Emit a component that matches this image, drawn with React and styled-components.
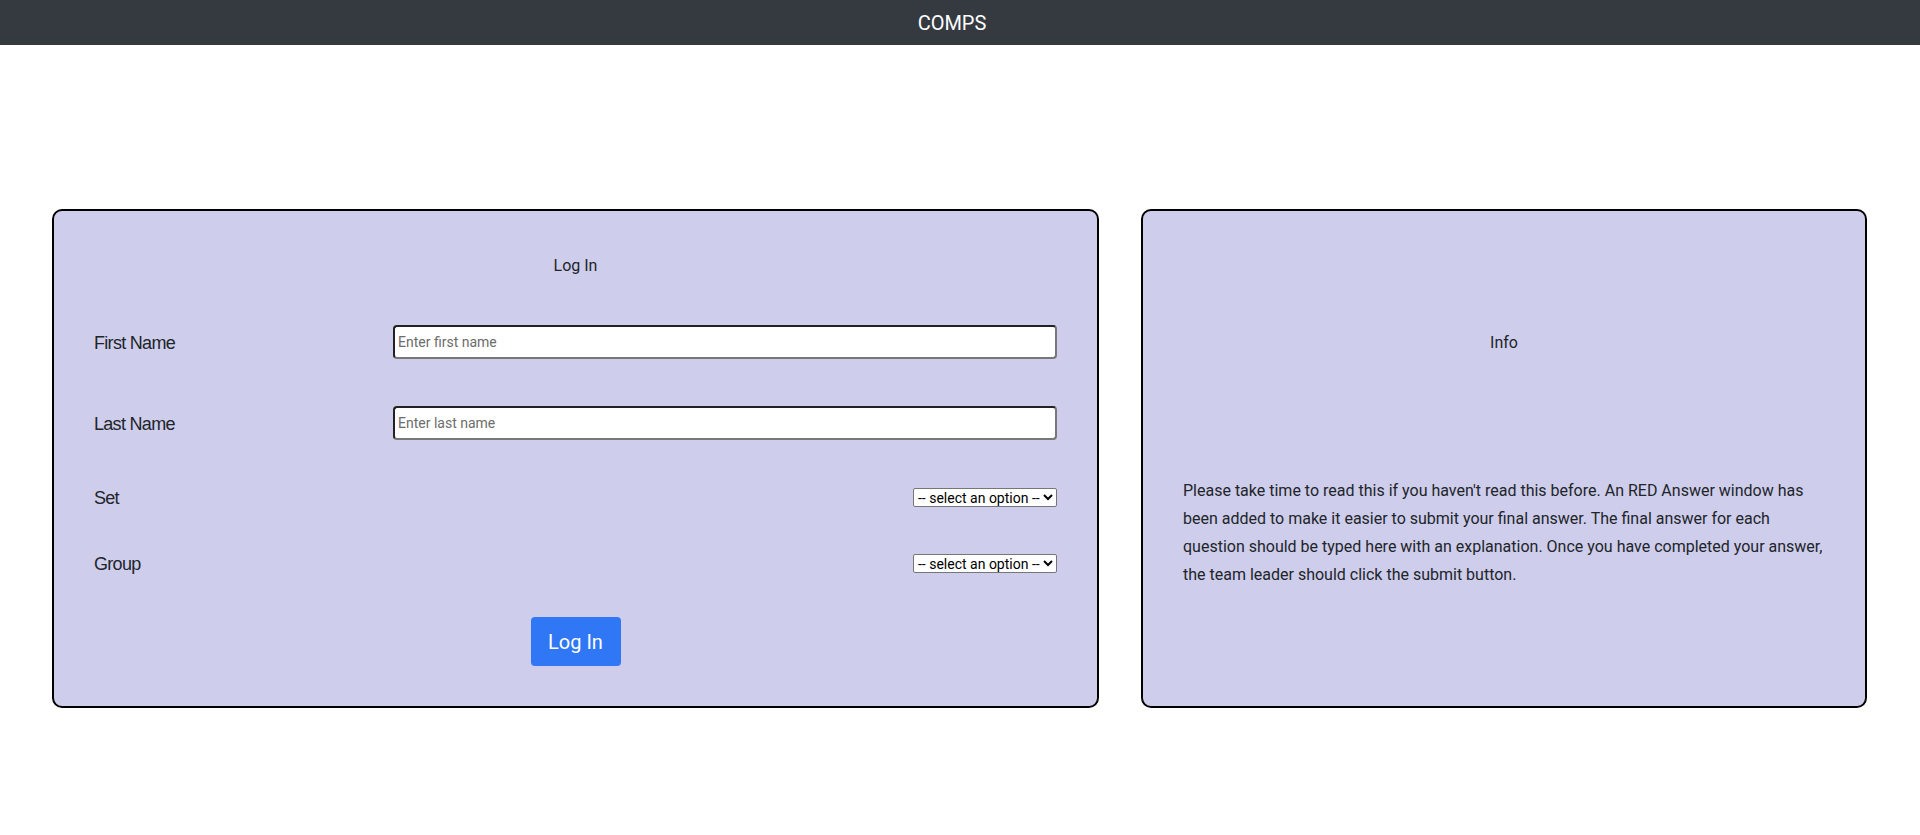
import React from "react";
import styled, { createGlobalStyle } from "styled-components";

const Global = createGlobalStyle`
  html, body { margin: 0; padding: 0; background: #fff; }
  body { font-family: Roboto, "Liberation Sans", sans-serif; color: #212529; }
  * { box-sizing: border-box; }
`;

const Header = styled.header`
  height: 45px;
  background: #343a40;
  color: #fff;
  display: flex;
  align-items: center;
  justify-content: center;
  padding-right: 16px;
  font-family: Roboto, sans-serif;
  font-size: 20px;
`;

const Main = styled.main`
  display: flex;
  gap: 42px;
  padding: 164px 53px 0 52px;
`;

const Card = styled.section`
  width: ${(p) => p.$w}px;
  height: 499px;
  background: #cecdec;
  border: 2px solid #000;
  border-radius: 10px;
  padding: 0 40px;
  display: flex;
  flex-direction: column;
`;

const Title = styled.div`
  text-align: center;
  font-family: Roboto, sans-serif;
  font-size: 16px;
  color: #212529;
  margin-top: ${(p) => p.$top}px;
  line-height: 24px;
`;

const Row = styled.div`
  display: grid;
  grid-template-columns: 299px 1fr;
  align-items: center;
  min-height: ${(p) => p.$h}px;
  margin-top: ${(p) => p.$top}px;
`;

const Label = styled.label`
  font-family: "Liberation Sans", Arial, sans-serif;
  font-size: 18px;
  letter-spacing: -0.7px;
  color: #212529;
  padding-top: 3px;
`;

const TextInput = styled.input`
  width: 100%;
  height: 34px;
  border: 2px solid #222;
  border-bottom-color: #777;
  border-right-color: #777;
  border-radius: 4px;
  background: #fff;
  padding: 0 3px;
  font-family: Roboto, sans-serif;
  font-size: 14px;
  color: #222;
  &::placeholder { color: #6c6c6c; }
`;

const Select = styled.select`
  justify-self: end;
  width: 144px;
  height: 19px;
  font-family: Roboto, Arial, sans-serif;
  font-size: 14px;
  border: 1px solid #767676;
  border-radius: 2px;
  background: #fff;
  color: #000;
  padding: 0;
`;

const ButtonWrap = styled.div`
  display: flex;
  justify-content: center;
  margin-top: 42px;
`;

const Button = styled.button`
  width: 90px;
  height: 49px;
  background: #3077f6;
  color: #fff;
  border: none;
  border-radius: 4px;
  font-family: Roboto, sans-serif;
  font-size: 20px;
  cursor: pointer;
`;

const Paragraph = styled.p`
  margin: 122px -24px 0 0;
  font-family: Roboto, sans-serif;
  font-size: 16px;
  line-height: 28px;
  color: #212529;
`;

export default function App() {
  return (
    <>
      <Global />
      <Header>COMPS</Header>
      <Main>
        <Card $w={1047}>
          <Title $top={43}>Log In</Title>
          <Row $h={34} $top={47}>
            <Label htmlFor="fn">First Name</Label>
            <TextInput id="fn" placeholder="Enter first name" />
          </Row>
          <Row $h={34} $top={47}>
            <Label htmlFor="ln">Last Name</Label>
            <TextInput id="ln" placeholder="Enter last name" />
          </Row>
          <Row $h={24} $top={45}>
            <Label>Set</Label>
            <Select defaultValue="">
              <option value="" disabled>-- select an option --</option>
            </Select>
          </Row>
          <Row $h={24} $top={42}>
            <Label>Group</Label>
            <Select defaultValue="">
              <option value="" disabled>-- select an option --</option>
            </Select>
          </Row>
          <ButtonWrap>
            <Button>Log In</Button>
          </ButtonWrap>
        </Card>
        <Card $w={726}>
          <Title $top={120}>Info</Title>
          <Paragraph>
            Please take time to read this if you haven't read this before. An RED Answer window has
            <br />
            been added to make it easier to submit your final answer. The final answer for each
            <br />
            question should be typed here with an explanation. Once you have completed your answer,
            <br />
            the team leader should click the submit button.
          </Paragraph>
        </Card>
      </Main>
    </>
  );
}
